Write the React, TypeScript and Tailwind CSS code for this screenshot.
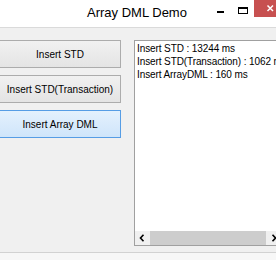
import React from "react";

const font = { fontFamily: '"Liberation Sans", Arial, sans-serif' };

function Btn({ label, hot }: { label: string; hot?: boolean }) {
  return (
    <div
      className={
        "h-[28px] w-[122px] -ml-px flex items-center justify-center border text-[10px] text-black " +
        (hot
          ? "border-[#569de5] bg-gradient-to-b from-[#e4f1fd] to-[#cfe5fa]"
          : "border-[#acacac] bg-gradient-to-b from-[#f1f1f1] to-[#e4e4e4]")
      }
    >
      {label}
    </div>
  );
}

export default function App() {
  return (
    <div
      className="w-[276px] h-[260px] overflow-hidden flex flex-col bg-[#f0f0f0]"
      style={font}
    >
      {/* title bar */}
      <div className="h-[28px] w-[276px] shrink-0 bg-white border-b border-[#dadada] flex items-start overflow-hidden">
        <div className="w-[210px] shrink-0 pl-[87px] pt-[5px] text-[13px] leading-[16px] text-black whitespace-nowrap">
          Array DML Demo
        </div>
        <svg width="66" height="17" viewBox="0 0 66 17" className="block shrink-0">
          <rect x="7" y="11" width="7" height="2" fill="#000" />
          <rect x="28.5" y="7.5" width="9" height="6" fill="none" stroke="#000" strokeWidth="1" />
          <rect x="28" y="7" width="10" height="2" fill="#000" />
          <rect x="44" y="0" width="22" height="17" fill="#c75050" />
          <path d="M57.5 5.5 L63 11 M63 5.5 L57.5 11" stroke="#ffffff" strokeWidth="1.5" />
        </svg>
      </div>

      {/* client */}
      <div className="flex pt-[12px] overflow-hidden">
        <div className="w-[121px] shrink-0 flex flex-col gap-[7px]">
          <Btn label="Insert STD" />
          <Btn label="Insert STD(Transaction)" />
          <Btn label="Insert Array DML" hot />
        </div>
        <div className="ml-[13px] w-[160px] h-[206px] shrink-0 border border-[#a0a0a0] bg-white flex flex-col">
          <div className="flex-1 pt-[1px] pl-[2px] text-[10px] leading-[13px] tracking-[-0.1px] text-black whitespace-nowrap">
            <div>Insert STD : 13244 ms</div>
            <div>Insert STD(Transaction) : 1062 ms</div>
            <div>Insert ArrayDML : 160 ms</div>
          </div>
          <div className="h-[14px] flex bg-[#f0f0f0]">
            <div className="w-[14px] h-[14px] shrink-0 flex items-center justify-center">
              <svg width="6" height="8" viewBox="0 0 6 8">
                <path d="M4.5 0.8 L1.5 4 L4.5 7.2" stroke="#000" strokeWidth="1.6" fill="none" />
              </svg>
            </div>
            <div className="ml-[1px] w-[116px] h-[14px] shrink-0 bg-[#cdcdcd]" />
            <div className="ml-[1px] w-[14px] h-[14px] shrink-0 flex items-center justify-center">
              <svg width="6" height="8" viewBox="0 0 6 8">
                <path d="M1.5 0.8 L4.5 4 L1.5 7.2" stroke="#000" strokeWidth="1.6" fill="none" />
              </svg>
            </div>
          </div>
        </div>
      </div>

      <div className="mt-[6px] flex-1 border-t border-[#d2d2d2] bg-[#f7f7f7]" />
    </div>
  );
}
